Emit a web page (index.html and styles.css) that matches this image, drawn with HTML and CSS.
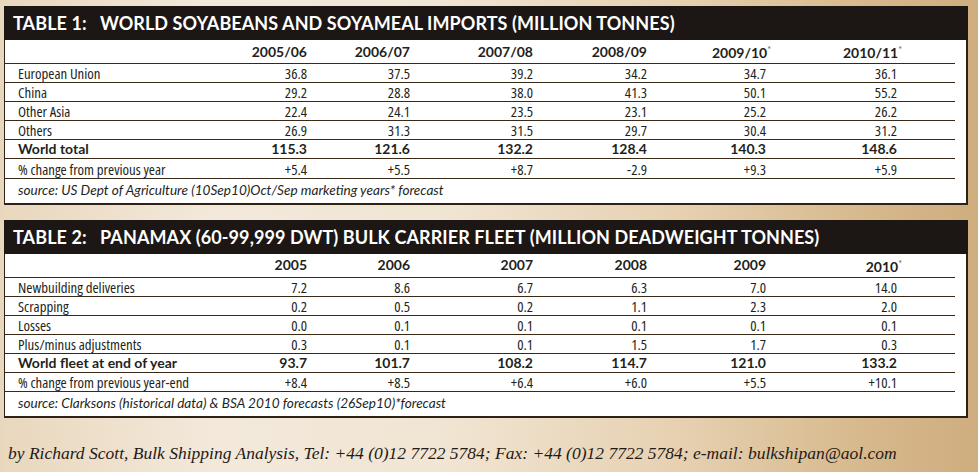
FILE: index.html
```html
<!DOCTYPE html>
<html>
<head>
<meta charset="utf-8">
<link rel="stylesheet" href="styles.css">
</head>
<body>
<div class="page">
  <section class="panel">
    <h2 class="title">TABLE 1:&nbsp;&nbsp; WORLD SOYABEANS AND SOYAMEAL IMPORTS (MILLION TONNES)</h2>
    <table class="data">
      <colgroup>
        <col class="c-label"><col class="c1"><col class="c2"><col class="c3"><col class="c4"><col class="c5"><col class="c6">
      </colgroup>
      <tr class="head"><td></td><td>2005/06</td><td>2006/07</td><td>2007/08</td><td>2008/09</td><td>2009/10<span class="star">*</span></td><td>2010/11<span class="star">*</span></td></tr>
      <tr><td>European Union</td><td>36.8</td><td>37.5</td><td>39.2</td><td>34.2</td><td>34.7</td><td>36.1</td></tr>
      <tr><td>China</td><td>29.2</td><td>28.8</td><td>38.0</td><td>41.3</td><td>50.1</td><td>55.2</td></tr>
      <tr><td>Other Asia</td><td>22.4</td><td>24.1</td><td>23.5</td><td>23.1</td><td>25.2</td><td>26.2</td></tr>
      <tr><td>Others</td><td>26.9</td><td>31.3</td><td>31.5</td><td>29.7</td><td>30.4</td><td>31.2</td></tr>
      <tr class="total"><td>World total</td><td>115.3</td><td>121.6</td><td>132.2</td><td>128.4</td><td>140.3</td><td>148.6</td></tr>
      <tr><td>% change from previous year</td><td>+5.4</td><td>+5.5</td><td>+8.7</td><td>-2.9</td><td>+9.3</td><td>+5.9</td></tr>
      <tr class="source"><td colspan="7">source: US Dept of Agriculture (10Sep10)Oct/Sep marketing years* forecast</td></tr>
    </table>
  </section>

  <section class="panel">
    <h2 class="title">TABLE 2:&nbsp;&nbsp; PANAMAX (60-99,999 DWT) BULK CARRIER FLEET (MILLION DEADWEIGHT TONNES)</h2>
    <table class="data">
      <colgroup>
        <col class="c-label"><col class="c1"><col class="c2"><col class="c3"><col class="c4"><col class="c5"><col class="c6">
      </colgroup>
      <tr class="head"><td></td><td>2005</td><td>2006</td><td>2007</td><td>2008</td><td>2009</td><td>2010<span class="star">*</span></td></tr>
      <tr><td>Newbuilding deliveries</td><td>7.2</td><td>8.6</td><td>6.7</td><td>6.3</td><td>7.0</td><td>14.0</td></tr>
      <tr><td>Scrapping</td><td>0.2</td><td>0.5</td><td>0.2</td><td>1.1</td><td>2.3</td><td>2.0</td></tr>
      <tr><td>Losses</td><td>0.0</td><td>0.1</td><td>0.1</td><td>0.1</td><td>0.1</td><td>0.1</td></tr>
      <tr><td>Plus/minus adjustments</td><td>0.3</td><td>0.1</td><td>0.1</td><td>1.5</td><td>1.7</td><td>0.3</td></tr>
      <tr class="total"><td>World fleet at end of year</td><td>93.7</td><td>101.7</td><td>108.2</td><td>114.7</td><td>121.0</td><td>133.2</td></tr>
      <tr><td>% change from previous year-end</td><td>+8.4</td><td>+8.5</td><td>+6.4</td><td>+6.0</td><td>+5.5</td><td>+10.1</td></tr>
      <tr class="source"><td colspan="7">source: Clarksons (historical data) &amp; BSA 2010 forecasts (26Sep10)*forecast</td></tr>
    </table>
  </section>

  <p class="byline">by Richard Scott, Bulk Shipping Analysis, Tel: +44 (0)12 7722 5784; Fax: +44 (0)12 7722 5784; e-mail: bulkshipan@aol.com</p>
</div>
</body>
</html>
```

FILE: styles.css
```css
html, body {
  margin: 0;
  padding: 0;
}

body {
  width: 978px;
  height: 472px;
  overflow: hidden;
  background: linear-gradient(90deg, #e9d7bd 0%, #f3e9db 22%, #f1e5d3 45%, #e6d0b0 70%, #d7b98d 88%, #cfad7f 100%);
  color: #231f1c;
}

.page {
  padding: 6px 0 0 4px;
}

.panel {
  width: 964px;
  box-sizing: border-box;
  background: #ffffff;
  border-left: 1px solid #2e2217;
  border-right: 2px solid #2e2217;
  border-bottom: 2px solid #2e2217;
}

.panel + .panel {
  margin-top: 15px;
}

.title {
  margin: 0 -2px 0 -1px;
  height: 34px;
  line-height: 35px;
  padding-left: 9px;
  background: #1c1714;
  color: #ffffff;
  font-family: Lato, "Open Sans", sans-serif;
  font-weight: 700;
  font-size: 18px;
  letter-spacing: 0.08px;
  white-space: nowrap;
}

.data {
  border-collapse: collapse;
  table-layout: fixed;
  width: 950px;
  font-family: "Open Sans", Roboto, sans-serif;
  font-stretch: 80%;
  font-size: 14.8px;
}

.c-label { width: 199px; }
.c1 { width: 103px; }
.c2 { width: 103px; }
.c3 { width: 123px; }
.c4 { width: 114px; }
.c5 { width: 119px; }
.c6 { width: 189px; }

.data td {
  padding: 0;
  height: 18.1px;
  line-height: 18px;
  text-align: right;
  border-bottom: 1px solid #3a2916;
  white-space: nowrap;
}

.data td:first-child {
  text-align: left;
  padding-left: 13px;
}

.data td:last-child {
  padding-right: 58px;
}

.data .head td {
  height: 20px;
  font-family: Lato, "Open Sans", sans-serif;
  font-weight: 700;
  font-stretch: normal;
  font-size: 14px;
  line-height: 20px;
}

.star {
  font-size: 9px;
  font-weight: 400;
  vertical-align: 5px;
  margin-right: -5px;
  color: #6b5a48;
}

.data .total td {
  font-family: Lato, "Open Sans", sans-serif;
  font-weight: 700;
  font-stretch: normal;
  font-size: 14px;
}

.data .source td {
  border-bottom: none;
  height: 24px;
  line-height: 22px;
  text-align: left;
  font-family: Lato, "Open Sans", sans-serif;
  font-style: italic;
  font-stretch: normal;
  font-size: 13.6px;
  vertical-align: top;
  padding-top: 0;
}

.byline {
  margin: 25px 0 0 4px;
  font-family: "Liberation Serif", "Times New Roman", serif;
  font-style: italic;
  font-size: 17.5px;
  color: #1f1a16;
  white-space: nowrap;
}
```
